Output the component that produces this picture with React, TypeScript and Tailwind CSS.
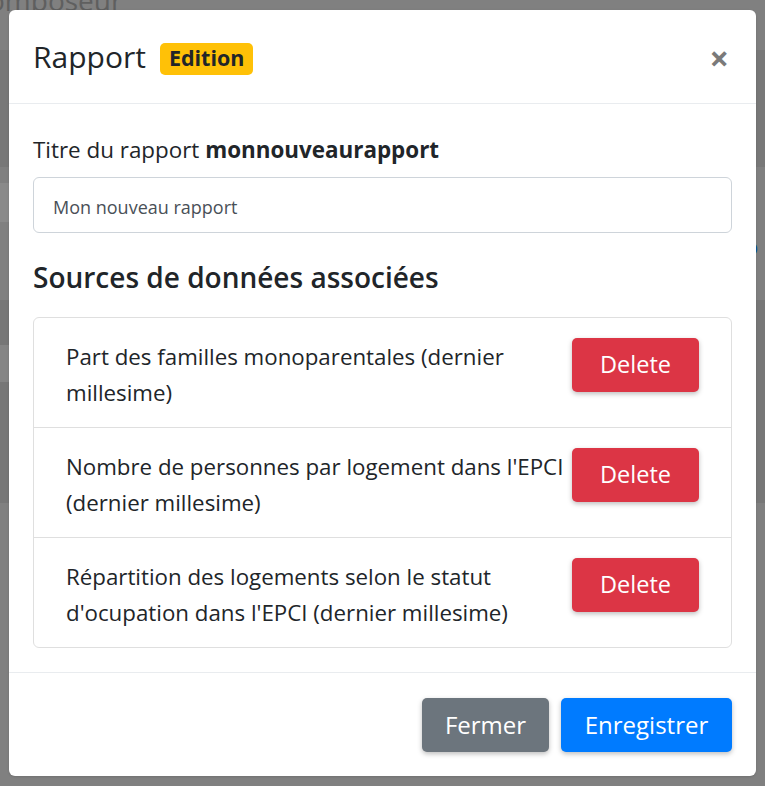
import React from "react";

const sources = [
  ["Part des familles monoparentales (dernier", "millesime)"],
  ["Nombre de personnes par logement dans l'EPCI", "(dernier millesime)"],
  ["Répartition des logements selon le statut", "d'ocupation dans l'EPCI (dernier millesime)"],
];

function Backdrop() {
  return (
    <div className="flex flex-col h-full">
      <div className="h-[50px] bg-[#808080] overflow-hidden">
        <div className="text-[28px] leading-[28px] -mt-[14px] -ml-[12px] text-[#5f5f5f]">omposeur</div>
      </div>
      <div className="h-[117px] bg-[#787878]" />
      <div className="h-[133px] bg-[#808080] flex justify-between">
        <div className="mt-[16px] h-[39px] w-[30px] bg-[#8a8a8a] flex items-center justify-end text-[16px] font-bold text-black">
          r
        </div>
        <div className="w-[20px] text-[22px] pt-[24px] flex flex-col gap-[22px] leading-none">
          <span className="text-black">f</span>
          <span className="text-[#0b4fa8]">o</span>
        </div>
      </div>
      <div className="h-[203px] bg-[#777777] flex">
        <div className="mt-[45px] h-[37px] w-[30px] bg-[#858585] flex items-center justify-end text-[16px] font-bold text-black">
          r
        </div>
      </div>
      <div className="flex-1 bg-[#808080]" />
    </div>
  );
}

export default function App() {
  return (
    <div
      className="relative h-[786px] w-[765px] overflow-hidden text-[#212529]"
      style={{ fontFamily: '"Open Sans", "Noto Sans", sans-serif' }}
    >
      <Backdrop />

      <div className="absolute left-[9px] top-[10px] w-[747px] h-[766px] bg-white rounded-[6px] flex flex-col shadow-sm">
        {/* header */}
        <div className="shrink-0 h-[94px] px-6 flex items-center justify-between border-b border-[#e9ecef]">
          <div className="flex items-center">
            <h3 className="text-[30px] font-medium leading-none">Rapport</h3>
            <span className="ml-[14px] mt-[4px] h-[32px] px-[9px] rounded-[5px] bg-[#ffc107] text-[21.5px] font-bold flex items-center">
              Edition
            </span>
          </div>
          <button className="text-[34px] font-bold leading-none text-[#7a7a7a] mr-[3px] mt-[2px]">
            ×
          </button>
        </div>

        {/* body */}
        <div className="flex-1 px-6 pt-[31px] pb-[24px]">
          <label className="block text-[22.4px] leading-[30px]">
            Titre du rapport <span className="font-bold">monnouveaurapport</span>
          </label>
          <div className="mt-3 h-[56px] border border-[#ced4da] rounded-[6px] flex items-center pl-[19px] pt-[4px] text-[18px] text-[#495057]">
            Mon nouveau rapport
          </div>

          <h4 className="mt-[29px] text-[28px] leading-[31px] font-semibold">
            Sources de données associées
          </h4>

          <div className="mt-[24px] border border-[#dfdfdf] rounded-[6px]">
            {sources.map((lines, i) => (
              <div
                key={i}
                className={
                  "flex items-start justify-between pl-8 pr-8 py-[18.5px] " +
                  (i > 0 ? "border-t border-[#dfdfdf]" : "")
                }
              >
                <div className="relative top-[2px] flex-1 min-w-0 text-[22.3px] leading-[36px]">
                  {lines.map((l) => (
                    <div key={l} className="whitespace-nowrap">
                      {l}
                    </div>
                  ))}
                </div>
                <button className="relative mt-[1px] w-[127px] h-[54px] shrink-0 rounded-[5px] bg-[#dc3545] text-white text-[23.5px] shadow-[0_2px_5px_rgba(0,0,0,0.26)]">
                  Delete
                </button>
              </div>
            ))}
          </div>
        </div>

        {/* footer */}
        <div className="shrink-0 h-[104px] border-t border-[#e9ecef] flex items-center justify-end gap-3 px-6">
          <button className="w-[127px] h-[54px] rounded-[5px] bg-[#6c757d] text-white text-[24px] shadow-[0_2px_5px_rgba(0,0,0,0.26)]">
            Fermer
          </button>
          <button className="w-[171px] h-[54px] rounded-[5px] bg-[#007bff] text-white text-[24px] shadow-[0_2px_5px_rgba(0,0,0,0.26)]">
            Enregistrer
          </button>
        </div>
      </div>
    </div>
  );
}
